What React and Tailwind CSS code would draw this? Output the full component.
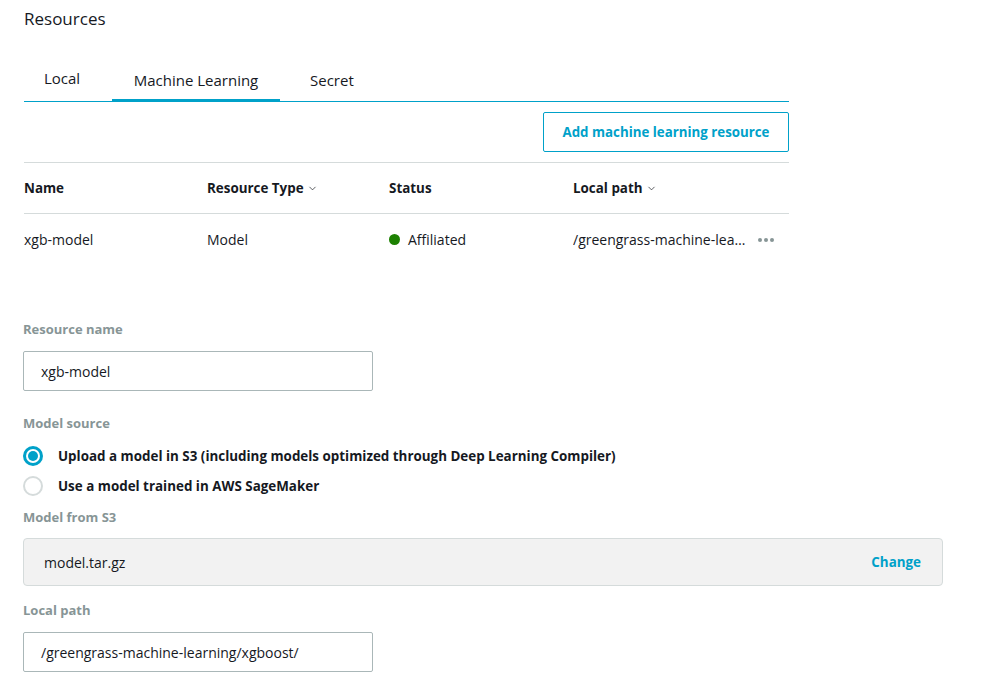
import { ChevronDown } from 'lucide-react';

const columns = [
  { label: 'Name', sort: false, w: 'w-[183px]' },
  { label: 'Resource Type', sort: true, w: 'w-[182px]' },
  { label: 'Status', sort: false, w: 'w-[184px]' },
  { label: 'Local path', sort: true, w: 'flex-1' },
];

function Radio({ checked, children }) {
  return (
    <div className="flex items-center h-[30px]">
      {checked ? (
        <span className="w-[20px] h-[20px] rounded-full bg-[#00a1c9] flex items-center justify-center ml-[23px]">
          <span className="w-[14px] h-[14px] rounded-full bg-white flex items-center justify-center">
            <span className="w-[10px] h-[10px] rounded-full bg-[#00a1c9]" />
          </span>
        </span>
      ) : (
        <span className="w-[20px] h-[20px] rounded-full border-2 border-[#d5dbdb] ml-[23px]" />
      )}
      <span className="ml-[15px] text-[13.4px] font-bold text-[#16191f]">{children}</span>
    </div>
  );
}

export default function App() {
  return (
    <div className="w-[1006px] h-[688px] bg-white text-[#16191f] font-['Open_Sans',sans-serif] overflow-hidden">
      <div className="pl-[24px]">
        <h1 className="pt-[8px] text-[17px] leading-[22px] text-[#16191f]">Resources</h1>

        {/* tabs */}
        <div className="w-[765px] mt-[35px] flex items-end border-b border-[#00a1c9] h-[37px]">
          <div className="w-[88px] pl-[20px] h-full text-[15px] leading-[20px] pt-[3px]">Local</div>
          <div className="w-[168px] h-full text-[15px] leading-[20px] pt-[4px] border-b-[3px] border-[#00a1c9] -mb-[1px] text-center">
            Machine Learning
          </div>
          <div className="pl-[30px] h-full text-[15px] leading-[20px] pt-[5px]">Secret</div>
        </div>

        <div className="w-[765px] flex justify-end pt-[10px] pb-[10px] border-b border-[#d5dbdb]">
          <button className="w-[246px] h-[40px] pt-[1px] border border-[#00a1c9] text-[#00a1c9] text-[13.3px] font-bold rounded-[2px]">
            Add machine learning resource
          </button>
        </div>

        {/* table */}
        <div className="w-[765px]">
          <div className="flex items-center h-[51px] border-b border-[#d5dbdb]">
            {columns.map((c) => (
              <div key={c.label} className={`${c.w} flex items-center text-[13.4px] font-bold`}>
                {c.label}
                {c.sort && <ChevronDown size={11} strokeWidth={1.5} className="ml-[3px] mt-[1px]" />}
              </div>
            ))}
          </div>
          <div className="flex items-center h-[51px] text-[14px]">
            <div className="w-[183px]">xgb-model</div>
            <div className="w-[182px]">Model</div>
            <div className="w-[184px] flex items-center">
              <span className="w-[11px] h-[11px] rounded-full bg-[#1d8102] mr-[8px]" />
              Affiliated
            </div>
            <div className="flex-1 flex items-center">
              <span className="w-[174px] truncate">/greengrass-machine-learning/xgboost/</span>
              <span className="ml-[11px] flex gap-[2px]">
                <span className="w-[4px] h-[4px] rounded-full bg-[#879596]" />
                <span className="w-[4px] h-[4px] rounded-full bg-[#879596]" />
                <span className="w-[4px] h-[4px] rounded-full bg-[#879596]" />
              </span>
            </div>
          </div>
        </div>
      </div>

      {/* form */}
      <div className="pl-[23px] mt-[55px]">
        <div className="text-[13px] font-bold text-[#879596] leading-[18px]">Resource name</div>
        <div className="mt-[13px] w-[350px] h-[40px] border border-[#aab7b8] rounded-[2px] flex items-center pl-[17px] text-[14px]">
          xgb-model
        </div>
        <div className="mt-[23px] text-[13px] font-bold text-[#879596] leading-[18px]">Model source</div>
      </div>
      <div className="mt-[9px]">
        <Radio checked>Upload a model in S3 (including models optimized through Deep Learning Compiler)</Radio>
        <Radio>Use a model trained in AWS SageMaker</Radio>
      </div>
      <div className="pl-[23px]">
        <div className="mt-[7px] text-[13px] font-bold text-[#879596] leading-[18px]">Model from S3</div>
        <div className="mt-[12px] w-[920px] h-[48px] bg-[#f2f2f2] border border-[#d5dbdb] rounded-[4px] flex items-center justify-between pl-[20px] pr-[21px] text-[14px]">
          <span>model.tar.gz</span>
          <span className="text-[13.4px] font-bold text-[#00a1c9]">Change</span>
        </div>
        <div className="mt-[15px] text-[13px] font-bold text-[#879596] leading-[18px]">Local path</div>
        <div className="mt-[13px] w-[350px] h-[40px] border border-[#aab7b8] rounded-[2px] flex items-center pl-[17px] text-[14px]">
          /greengrass-machine-learning/xgboost/
        </div>
      </div>
    </div>
  );
}
